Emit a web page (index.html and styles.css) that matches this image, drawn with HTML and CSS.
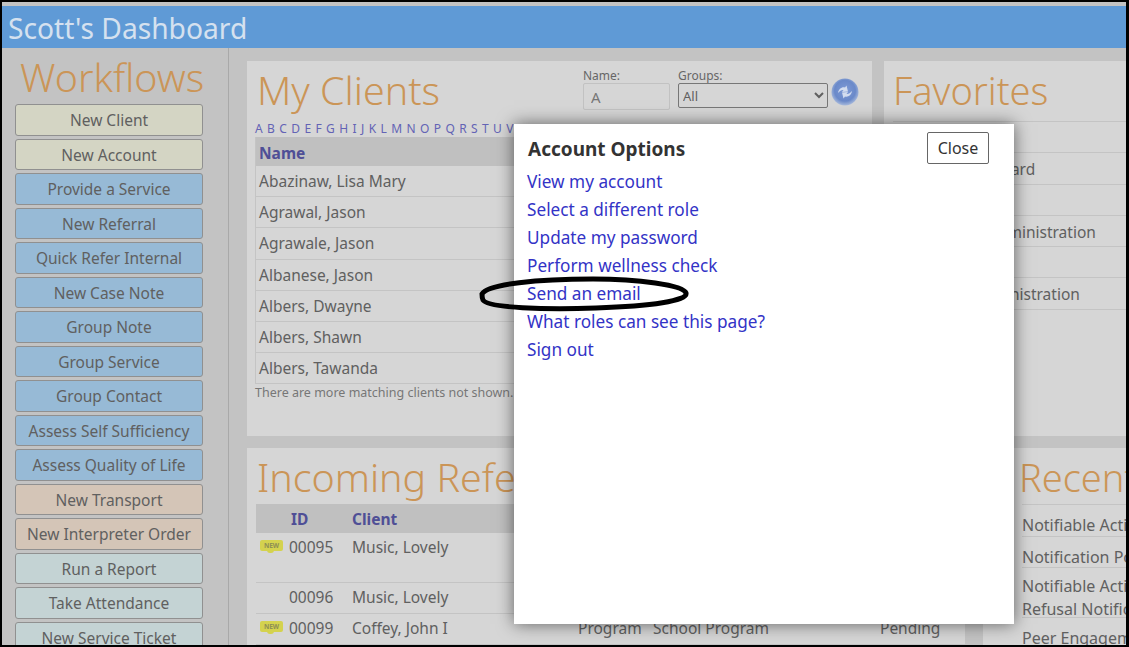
FILE: index.html
```html
<!DOCTYPE html>
<html lang="en">
<head>
<meta charset="utf-8">
<title>Scott's Dashboard</title>
<link rel="stylesheet" href="styles.css">
</head>
<body>
<div class="app">
  <header class="topbar">Scott's Dashboard</header>
  <div class="layout">
    <aside class="sidebar">
      <h2 class="side-title">Workflows</h2>
      <a class="flow tan">New Client</a>
      <a class="flow tan">New Account</a>
      <a class="flow blue">Provide a Service</a>
      <a class="flow blue">New Referral</a>
      <a class="flow blue">Quick Refer Internal</a>
      <a class="flow blue">New Case Note</a>
      <a class="flow blue">Group Note</a>
      <a class="flow blue">Group Service</a>
      <a class="flow blue">Group Contact</a>
      <a class="flow blue">Assess Self Sufficiency</a>
      <a class="flow blue">Assess Quality of Life</a>
      <a class="flow peach">New Transport</a>
      <a class="flow peach">New Interpreter Order</a>
      <a class="flow teal">Run a Report</a>
      <a class="flow teal">Take Attendance</a>
      <a class="flow teal">New Service Ticket</a>
    </aside>
    <main class="main">
      <div class="row top-row">
        <section class="panel clients">
          <div class="clients-head">
            <h2 class="title">My Clients</h2>
            <div class="filters">
              <label class="field name-field"><span>Name:</span><input class="name-input" value="A"></label>
              <label class="field group-field"><span>Groups:</span><select class="group-select"><option>All</option></select></label>
              <svg class="refresh" width="28" height="28" viewBox="0 0 28 28" aria-hidden="true">
                <defs><radialGradient id="orb" cx="50%" cy="45%" r="55%"><stop offset="0" stop-color="#7f9bd6"/><stop offset="0.7" stop-color="#6a89c9"/><stop offset="1" stop-color="#a9bbdd"/></radialGradient></defs>
                <circle cx="14" cy="14" r="13.500" fill="url(#orb)"/>
                <path d="M7 15c.5-4 4-6.500 7-5.500l1.500-2 1.500 6-6 .5 1.500-2c-2-.3-3.500.8-5.500 3z" fill="#d3ddef"/>
                <path d="M21 13c-.5 4-4 6.500-7 5.500l-1.500 2-1.500-6 6-.5-1.500 2c2 .3 3.500-.8 5.500-3z" fill="#d3ddef"/>
              </svg>
            </div>
          </div>
          <div class="letters"><a>A</a><a>B</a><a>C</a><a>D</a><a>E</a><a>F</a><a>G</a><a>H</a><a>I</a><a>J</a><a>K</a><a>L</a><a>M</a><a>N</a><a>O</a><a>P</a><a>Q</a><a>R</a><a>S</a><a>T</a><a>U</a><a>V</a><a>W</a><a>X</a><a>Y</a><a>Z</a></div>
          <div class="list">
            <div class="list-head">Name</div>
            <div class="list-row">Abazinaw, Lisa Mary</div>
            <div class="list-row">Agrawal, Jason</div>
            <div class="list-row">Agrawale, Jason</div>
            <div class="list-row">Albanese, Jason</div>
            <div class="list-row">Albers, Dwayne</div>
            <div class="list-row">Albers, Shawn</div>
            <div class="list-row">Albers, Tawanda</div>
          </div>
          <p class="more">There are more matching clients not shown.</p>
        </section>
        <section class="panel favorites">
          <h2 class="title">Favorites</h2>
          <div class="fav-list">
            <div class="fav-row"></div>
            <div class="fav-row fav-a">Dashboard</div>
            <div class="fav-row"></div>
            <div class="fav-row fav-b">Administration</div>
            <div class="fav-row"></div>
            <div class="fav-row fav-c">Administration</div>
          </div>
        </section>
      </div>
      <div class="row bottom-row">
        <section class="panel incoming">
          <h2 class="title">Incoming Referrals</h2>
          <table class="ref-table">
            <colgroup><col class="c-new"><col class="c-id"><col class="c-client"><col class="c-type"><col class="c-prog"><col class="c-stat"></colgroup>
            <thead><tr><th></th><th class="th-id">ID</th><th>Client</th><th></th><th></th><th></th></tr></thead>
            <tbody>
              <tr class="tall"><td><span class="badge">NEW</span></td><td>00095</td><td>Music, Lovely</td><td></td><td></td><td></td></tr>
              <tr><td></td><td>00096</td><td>Music, Lovely</td><td></td><td></td><td></td></tr>
              <tr><td><span class="badge">NEW</span></td><td>00099</td><td>Coffey, John I</td><td>Program</td><td>School Program</td><td>Pending</td></tr>
            </tbody>
          </table>
        </section>
        <section class="panel recent">
          <h2 class="title">Recent Items</h2>
          <div class="rec-list">
            <div class="rec-row">Notifiable Activity</div>
            <div class="rec-row">Notification Policy</div>
            <div class="rec-row rec-two">Notifiable Activity<br>Refusal Notification</div>
            <div class="rec-row">Peer Engagement</div>
          </div>
        </section>
      </div>
    </main>
  </div>
</div>
<div class="modal">
  <div class="modal-head">
    <h3 class="modal-title">Account Options</h3>
    <button class="close">Close</button>
  </div>
  <nav class="modal-links">
    <a>View my account</a>
    <a>Select a different role</a>
    <a>Update my password</a>
    <a>Perform wellness check</a>
    <a>Send an email</a>
    <a>What roles can see this page?</a>
    <a>Sign out</a>
  </nav>
</div>
<svg class="circle-mark" width="214" height="38" viewBox="0 0 214 38" aria-hidden="true">
  <path d="M4 19C10 9 60 4 115 4c45 0 90 6 93 14 2 8-35 13-90 15-50 2-108 0-113-8-1-2-1-4-1-6z" fill="none" stroke="#000" stroke-width="5"/>
</svg>
</body>
</html>
```
FILE: styles.css
```css
* { box-sizing: border-box; }
html, body { margin: 0; height: 100%; overflow: hidden; background: #000; }
body { font-family: "Noto Sans", "Open Sans", sans-serif; color: #606060; }

.app {
  width: 1124px;
  height: 643px;
  margin: 2px 0 0 2px;
  padding-top: 4px;
  background: #c3c3c3;
  display: flex;
  flex-direction: column;
  overflow: hidden;
}
.topbar {
  height: 42px;
  flex: none;
  background: #5f9ad6;
  color: #d5e1ef;
  font-size: 28.200px;
  line-height: 44px;
  padding-left: 6px;
  white-space: nowrap;
}
.layout { flex: 1; display: flex; min-height: 0; }

.sidebar {
  width: 227px;
  flex: none;
  border-right: 1px solid #a9a9a9;
  padding: 0 25px 0 13px;
  overflow: hidden;
}
.side-title {
  margin: 6px 0 0;
  height: 50px;
  padding-left: 5px;
  font-size: 39.400px;
  line-height: 46px;
  font-weight: 300;
  text-align: center;
  color: #cb9557;
  white-space: nowrap;
}
.flow {
  display: block;
  height: 31.500px;
  margin-bottom: 3px;
  border: 1px solid #909090;
  border-radius: 3px;
  text-align: center;
  font-size: 15.500px;
  line-height: 31px;
  white-space: nowrap;
}
.tan { background: #d4d5c4; }
.blue { background: #97bad6; }
.peach { background: #d4c5b7; }
.teal { background: #c4d3d4; }

.main { flex: 1; min-width: 0; padding: 13px 0 0 18px; }
.row { display: flex; }
.top-row { height: 375px; gap: 12px; margin-bottom: 12px; }
.bottom-row { gap: 18px; }
.panel { background: #d6d6d6; overflow: hidden; }
.title {
  margin: 0;
  font-size: 39.400px;
  line-height: 50px;
  font-weight: 300;
  color: #cb9557;
  white-space: nowrap;
}

.clients { width: 625px; flex: none; padding: 0 8px; }
.clients-head { display: flex; justify-content: space-between; height: 62px; }
.clients-head .title { margin-top: 4px; margin-left: 2px; }
.filters { display: flex; align-items: flex-start; margin-right: 5px; padding-top: 7px; }
.field { display: flex; flex-direction: column; font-size: 12px; color: #666; line-height: 15px; }
.name-field { margin-right: 8px; }
.name-input {
  width: 87px;
  height: 27px;
  border: 1px solid #c2c2c2;
  border-radius: 2px;
  background: #d6d6d6;
  color: #777;
  font: 15px "Noto Sans", sans-serif;
  padding: 2px 7px;
}
.group-field { margin-right: 3px; }
.group-select {
  width: 150px;
  height: 25px;
  border: 1px solid #777;
  border-radius: 2px;
  background: #d6d6d6;
  color: #606060;
  font: 13px "Noto Sans", sans-serif;
}
.refresh { margin-top: 10px; }
.letters { height: 14px; display: flex; gap: 4.400px; font-size: 12px; line-height: 14px; color: #6363b5; white-space: nowrap; margin-top: -1px; margin-bottom: 1px; }
.list { border-left: 1px solid #c4c4c4; }
.list-head {
  height: 29px;
  background: #c0c0c0;
  color: #4f4f96;
  font-weight: 700;
  font-size: 15.500px;
  line-height: 32px;
  padding-left: 3px;
}
.list-row {
  height: 31.200px;
  border-bottom: 1px solid #c4c4c4;
  font-size: 15.500px;
  line-height: 31px;
  padding-left: 3px;
  white-space: nowrap;
}
.more { margin: 0; font-size: 12.500px; line-height: 18px; color: #777; white-space: nowrap; }

.favorites { flex: 1; padding: 4px 0 0 9px; }
.favorites .title { font-size: 38px; }
.fav-list { margin-top: 6px; border-top: 1px solid #c4c4c4; }
.fav-row { height: 31.300px; border-bottom: 1px solid #c4c4c4; font-size: 15.500px; line-height: 32px; white-space: nowrap; }
.fav-a { padding-left: 62px; }
.fav-b { padding-left: 95px; }
.fav-c { padding-left: 79px; }

.incoming { width: 718px; flex: none; padding: 0 9px; }
.incoming .title { margin: 4px 0 2px 1px; }
.ref-table { margin-top: 1px; border-collapse: collapse; table-layout: fixed; width: 709px; font-size: 15.500px; }
.c-new { width: 33px; }
.c-id { width: 63px; }
.c-client { width: 226px; }
.c-type { width: 75px; }
.c-prog { width: 227px; }
.ref-table th {
  height: 29px;
  background: #c0c0c0;
  color: #4f4f96;
  font-weight: 700;
  text-align: left;
  padding: 0;
}
.th-id { padding-left: 2px !important; }
.ref-table td { height: 31px; padding: 0; border-bottom: 1px solid #c4c4c4; vertical-align: top; line-height: 28px; white-space: nowrap; }
.ref-table .tall td { height: 49px; }
.badge {
  position: relative;
  display: block;
  width: 23px;
  height: 11px;
  margin: 7px 0 0 4px;
  background: #d4d24e;
  border-radius: 2px;
  color: #8f8f55;
  font-size: 6.500px;
  line-height: 11px;
  font-weight: 700;
  text-align: center;
}
.badge::after {
  content: "";
  position: absolute;
  left: 7px;
  bottom: -2px;
  width: 7px;
  height: 3px;
  background: #d4d24e;
  border-radius: 0 0 3px 3px;
}

.recent { flex: 1; min-width: 0; padding: 0 0 0 39px; }
.recent .title { margin: 4px 0 1px -3px; font-size: 38px; }
.rec-list { margin-top: 2px; border-top: 1px solid #c4c4c4; }
.rec-row { height: 31.500px; border-bottom: 1px solid #c4c4c4; font-size: 16px; line-height: 40px; white-space: nowrap; overflow: hidden; }
.rec-two { height: 50px; line-height: 23px; padding-top: 7px; }

.modal {
  position: absolute;
  left: 514px;
  top: 124px;
  width: 500px;
  height: 500px;
  background: #fff;
  box-shadow: 0 0 16px rgba(0, 0, 0, .55);
  padding: 8px 25px 0 13px;
}
.modal-head { display: flex; justify-content: space-between; align-items: flex-start; }
.modal-title { margin: 5px 0 0 1px; font-size: 19px; line-height: 24px; font-weight: 700; color: #333; }
.close {
  width: 62px;
  height: 32px;
  background: #fff;
  border: 1px solid #666;
  border-radius: 2px;
  color: #333;
  font: 16px "Noto Sans", sans-serif;
  padding: 0;
}
.modal-links { display: flex; flex-direction: column; margin-top: 4px; }
.modal-links a { height: 28px; font-size: 17.200px; line-height: 28px; color: #3333c6; white-space: nowrap; }

.circle-mark { position: absolute; left: 478px; top: 275px; }
```
